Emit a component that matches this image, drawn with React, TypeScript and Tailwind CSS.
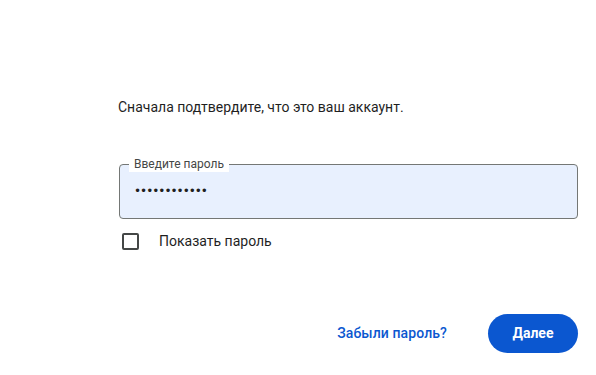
import React from "react";

export default function App() {
  return (
    <div className="w-[596px] h-[375px] bg-white overflow-hidden font-['Roboto',sans-serif] text-[#1f1f1f]">
      <div className="pl-[118px] pr-[18px] pt-[97px] flex flex-col">
        <p className="text-[14px] leading-[20px] text-[#1f1f1f]">
          Сначала подтвердите, что это ваш аккаунт.
        </p>
        <div className="mt-[47px] ml-[1px] relative h-[55px] rounded-[4px] border border-[#747775] bg-[#e8f0fe] flex items-center pl-[14px]">
          <span className="absolute left-[9px] -top-[9px] px-[5px] bg-white text-[12px] leading-[16px] text-[#444746]">
            Введите пароль
          </span>
          <span className="text-[12px] tracking-[-1px] text-[#1f1f1f] font-['DejaVu_Sans',sans-serif] mt-[-1px]">
            ••••••••••••
          </span>
        </div>
        <label className="mt-[12px] flex items-center">
          <span className="ml-[4px] w-[17px] h-[17px] rounded-[2px] border-2 border-[#444746]" />
          <span className="ml-[20px] text-[14px] leading-[20px] text-[#1f1f1f]">Показать пароль</span>
        </label>
        <div className="mt-[63px] flex items-center justify-end">
          <span className="text-[14px] font-medium text-[#0b57d0] tracking-[0.1px]">Забыли пароль?</span>
          <button className="ml-[41px] w-[90px] h-[39px] rounded-full bg-[#0b57d0] text-white text-[14px] font-bold">
            Далее
          </button>
        </div>
      </div>
    </div>
  );
}
